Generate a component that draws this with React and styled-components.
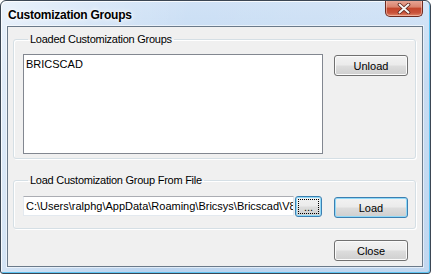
import React from "react";
import styled, { createGlobalStyle } from "styled-components";

const GlobalStyle = createGlobalStyle`
  html, body {
    margin: 0;
    padding: 0;
    background: #ffffff;
  }
  body {
    font-family: "Liberation Sans", Arial, sans-serif;
  }
`;

const Window = styled.div`
  width: 431px;
  height: 274px;
  box-sizing: border-box;
  display: flex;
  flex-direction: column;
  border: 1px solid #3b4653;
  border-radius: 6px 6px 3px 3px;
  padding: 0 7px 6px 6px;
  background: linear-gradient(
      100deg,
      rgba(255, 255, 255, 0.55) 0%,
      rgba(255, 255, 255, 0.25) 18%,
      rgba(255, 255, 255, 0) 40%,
      rgba(255, 255, 255, 0.1) 100%
    ),
    linear-gradient(to bottom, #d0e2f6 0%, #c1d8f1 30%, #bad3ee 100%);
  box-shadow: inset -1px -1px 0 #5fc4f2, inset 1px 1px 0 rgba(255, 255, 255, 0.8);
  overflow: hidden;
`;

const TitleBar = styled.div`
  height: 25px;
  display: flex;
  justify-content: space-between;
  align-items: flex-start;
  flex-shrink: 0;
`;

const Title = styled.span`
  margin-top: 7px;
  margin-left: 1px;
  font-size: 12px;
  letter-spacing: -0.25px;
  font-weight: bold;
  color: #000;
  text-shadow: 0 0 6px #ffffff, 0 0 3px #ffffff;
`;

const CloseButton = styled.div`
  width: 38px;
  height: 17px;
  margin-top: -1px;
  box-sizing: border-box;
  display: flex;
  align-items: center;
  justify-content: center;
  border: 1px solid #6e2b20;
  border-top: none;
  border-radius: 0 0 5px 5px;
  background: linear-gradient(
    to bottom,
    #e9a99a 0%,
    #d9826c 45%,
    #c3452b 50%,
    #c9523a 80%,
    #e08a6b 100%
  );
  box-shadow: inset 0 0 0 1px rgba(255, 220, 210, 0.5);
`;

const Client = styled.div`
  flex: 1;
  display: flex;
  flex-direction: column;
  border: 1px solid #6b7a8a;
  background: #f0f0f0;
  padding: 6px 6px 0 5px;
  box-shadow: 0 0 0 1px rgba(255, 255, 255, 0.55);
`;

const Group = styled.fieldset`
  margin: 0 0 ${(p) => p.$gap || 0}px 0;
  padding: ${(p) => p.$pad};
  min-width: 0;
  border: 1px solid #d5dfe5;
  border-radius: 3px;
  box-shadow: inset 1px 1px 0 #ffffff, 1px 1px 0 #ffffff;
  display: flex;
  align-items: flex-start;
`;

const Legend = styled.legend`
  padding: 0 2px;
  margin-left: 5px;
  font-size: 11px;
  letter-spacing: -0.25px;
  line-height: 13px;
  color: #000;
`;

const ListBox = styled.div`
  width: 300px;
  height: 100px;
  box-sizing: border-box;
  border: 1px solid #828790;
  background: #ffffff;
  padding: 3px 2px;
  font-size: 11px;
  color: #000;
  flex-shrink: 0;
`;

const PathField = styled.div`
  width: 271px;
  height: 20px;
  box-sizing: border-box;
  border: 1px solid #e3e9ef;
  border-top-color: #abadb3;
  background: #ffffff;
  padding: 0 2px;
  display: flex;
  align-items: center;
  font-size: 11px;
  white-space: nowrap;
  overflow: hidden;
  color: #000;
  flex-shrink: 0;
`;

const Button = styled.div`
  width: ${(p) => p.$w || 74}px;
  height: ${(p) => p.$h || 21}px;
  margin-left: ${(p) => p.$ml || 0}px;
  margin-top: ${(p) => p.$mt || 0}px;
  box-sizing: border-box;
  flex-shrink: 0;
  display: flex;
  align-items: center;
  justify-content: center;
  font-size: 11px;
  color: #000;
  border-radius: 3px;
  border: 1px solid ${(p) => (p.$active ? "#3c7fb1" : "#707070")};
  background: linear-gradient(
    to bottom,
    #f2f2f2 0%,
    #ebebeb 48%,
    #dddddd 52%,
    #cfcfcf 100%
  );
  box-shadow: inset 0 0 0 1px
    ${(p) => (p.$active ? "#8fd9f8" : "#fbfbfb")};
`;

const FocusRing = styled.span`
  display: flex;
  align-items: flex-end;
  justify-content: center;
  width: 19px;
  height: 13px;
  border: 1px dotted #000;
  line-height: 11px;
  font-size: 11px;
`;

const Footer = styled.div`
  display: flex;
  justify-content: flex-end;
  padding: 11px 8px 0 0;
`;

const CloseGlyph = () => (
  <svg width="14" height="11" viewBox="0 0 14 11">
    <path
      d="M2.5 1.5 L11.5 9.5 M11.5 1.5 L2.5 9.5"
      stroke="#5a2118"
      strokeWidth="3.6"
      strokeLinecap="round"
    />
    <path
      d="M2.5 1.5 L11.5 9.5 M11.5 1.5 L2.5 9.5"
      stroke="#f4f4f4"
      strokeWidth="2"
      strokeLinecap="round"
    />
  </svg>
);

const App = () => {
  return (
    <>
      <GlobalStyle />
      <Window>
        <TitleBar>
          <Title>Customization Groups</Title>
          <CloseButton>
            <CloseGlyph />
          </CloseButton>
        </TitleBar>
        <Client>
          <Group $pad="8px 8px 4px 9px" $gap={15}>
            <Legend>Loaded Customization Groups</Legend>
            <ListBox>BRICSCAD</ListBox>
            <Button $ml={11} $mt={1} $h={21}>
              Unload
            </Button>
          </Group>
          <Group $pad="9px 8px 10px 9px">
            <Legend>Load Customization Group From File</Legend>
            <PathField>
              C:\Users\ralphg\AppData\Roaming\Bricsys\Bricscad\V8\
            </PathField>
            <Button $w={27} $ml={1} $active>
              <FocusRing>...</FocusRing>
            </Button>
            <Button $ml={12} $mt={1} $active>
              Load
            </Button>
          </Group>
          <Footer>
            <Button>Close</Button>
          </Footer>
        </Client>
      </Window>
    </>
  );
};

export default App;
